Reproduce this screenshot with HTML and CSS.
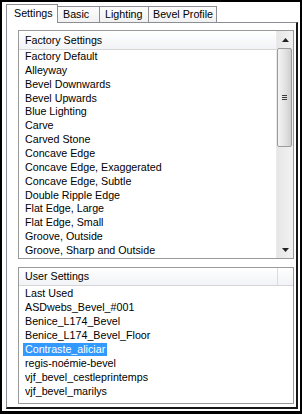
FILE: index.html
```html
<!DOCTYPE html>
<html>
<head>
  <title>Bevel - Settings</title>
  <meta charset="UTF-8">
  <link rel="stylesheet" href="styles.css">
</head>
<body>
  <div class="window">
    <!-- TABS -->
    <div class="tabs">
      <div class="tab tab-active tab-settings">Settings</div>
      <div class="tab tab-basic">Basic</div>
      <div class="tab tab-lighting">Lighting</div>
      <div class="tab tab-profile">Bevel Profile</div>
    </div>

    <div class="panel">
      <!-- FACTORY SETTINGS -->
      <div class="listbox factory">
        <div class="list-main">
          <div class="list-header">Factory Settings</div>
          <ul class="items">
            <li>Factory Default</li>
            <li>Alleyway</li>
            <li>Bevel Downwards</li>
            <li>Bevel Upwards</li>
            <li>Blue Lighting</li>
            <li>Carve</li>
            <li>Carved Stone</li>
            <li>Concave Edge</li>
            <li>Concave Edge, Exaggerated</li>
            <li>Concave Edge, Subtle</li>
            <li>Double Ripple Edge</li>
            <li>Flat Edge, Large</li>
            <li>Flat Edge, Small</li>
            <li>Groove, Outside</li>
            <li>Groove, Sharp and Outside</li>
          </ul>
        </div>
        <div class="scrollbar">
          <div class="sb-btn">
            <svg width="7" height="4" viewBox="0 0 7 4"><path d="M3.5 0 L7 4 L0 4 Z" fill="#222"/></svg>
          </div>
          <div class="sb-thumb">
            <span class="grip"></span>
          </div>
          <div class="sb-track"></div>
          <div class="sb-btn">
            <svg width="7" height="4" viewBox="0 0 7 4"><path d="M0 0 L7 0 L3.5 4 Z" fill="#222"/></svg>
          </div>
        </div>
      </div>

      <!-- USER SETTINGS -->
      <div class="listbox user">
        <div class="list-main">
          <div class="list-header user-header">
            <span class="col-name">User Settings</span>
            <span class="col-rest"></span>
          </div>
          <ul class="items user-items">
            <li>Last Used</li>
            <li>ASDwebs_Bevel_#001</li>
            <li>Benice_L174_Bevel</li>
            <li>Benice_L174_Bevel_Floor</li>
            <li><span class="selected">Contraste_aliciar</span></li>
            <li>regis-noémie-bevel</li>
            <li>vjf_bevel_cestleprintemps</li>
            <li>vjf_bevel_marilys</li>
          </ul>
        </div>
      </div>
    </div>
  </div>
</body>
</html>
```

FILE: styles.css
```css
body {
  margin: 0;
  font-family: "Liberation Sans", Arial, sans-serif;
  font-size: 10.7px;
  color: #000;
  background: #fff;
}
.window {
  width: 302px;
  height: 414px;
  box-sizing: border-box;
  border: 2px solid #000;
  border-bottom-width: 3px;
  padding: 2px 2px 2px 4px;
  background: #fff;
  display: flex;
  flex-direction: column;
}

/* tabs */
.tabs { display: flex; align-items: flex-end; height: 19px; margin-bottom: -1px; }
.tab {
  box-sizing: border-box;
  height: 17px;
  line-height: 15px;
  border: 1px solid #8c8e94;
  border-bottom: none;
  border-left: none;
  background: linear-gradient(#fdfdfd, #f0f0f0);
  padding-left: 4px;
  white-space: nowrap;
}
.tab-active {
  height: 19px;
  line-height: 17px;
  border-left: 1px solid #8c8e94;
  background: #fff;
  position: relative;
  z-index: 1;
  padding-left: 7px;
  padding-bottom: 1px;
}
.tab-settings { width: 52px; }
.tab-basic { width: 42px; padding-left: 5px; }
.tab-lighting { width: 49px; padding-left: 5px; }
.tab-profile { width: 68px; }

/* panel */
.panel {
  box-sizing: border-box;
  height: 388px;
  border-top: 1px solid #8c8e94;
  border-left: 1px solid #8c8e94;
  border-right: 2px solid #161616;
  border-bottom: 2px solid #161616;
  padding: 7px 2px 3px 11px;
  display: flex;
  flex-direction: column;
  gap: 8px;
}

/* list boxes */
.listbox { box-sizing: border-box; border: 1px solid #9a9a9a; display: flex; background: #fff; }
.factory { height: 229px; }
.user { height: 137px; }
.list-main { flex: 1; display: flex; flex-direction: column; min-width: 0; }
.list-header {
  height: 18px;
  line-height: 18px;
  padding-left: 6px;
  background: linear-gradient(#ffffff, #f1f3f6);
  border-bottom: 1px solid #d5d5d5;
  white-space: nowrap;
}
.user-header { height: 17px; line-height: 17px; padding-left: 0; display: flex; }
.user-header .col-name { width: 259px; padding-left: 6px; box-sizing: border-box; border-right: 1px solid #dcdcdc; }
.user-header .col-rest { flex: 1; }
.items { list-style: none; margin: 0; padding: 0; }
.items li { height: 13.87px; line-height: 13.87px; padding-left: 6px; white-space: nowrap; }
.user-items li { height: 14px; line-height: 14px; }
.selected { background: #3399ff; color: #fff; margin-left: -2px; padding: 0 2px; display: inline-block; line-height: 13px; }

/* scrollbar */
.scrollbar {
  width: 16px;
  display: flex;
  flex-direction: column;
  background: linear-gradient(90deg, #e6e6e6, #f2f2f2);
  border-left: 1px solid #eaeaea;
}
.sb-btn { height: 17px; display: flex; align-items: center; justify-content: center; }
.sb-thumb {
  height: 99px;
  margin: 0 1px 0 0;
  box-sizing: border-box;
  border: 1px solid #9b9b9b;
  border-radius: 2px;
  background: linear-gradient(90deg, #f4f4f4, #e2e2e2 55%, #cfcfcf);
  display: flex;
  align-items: center;
  justify-content: center;
}
.grip {
  width: 5px;
  height: 5px;
  background: repeating-linear-gradient(#3c3c3c 0 1px, transparent 1px 2px);
}
.sb-track { flex: 1; }
```
